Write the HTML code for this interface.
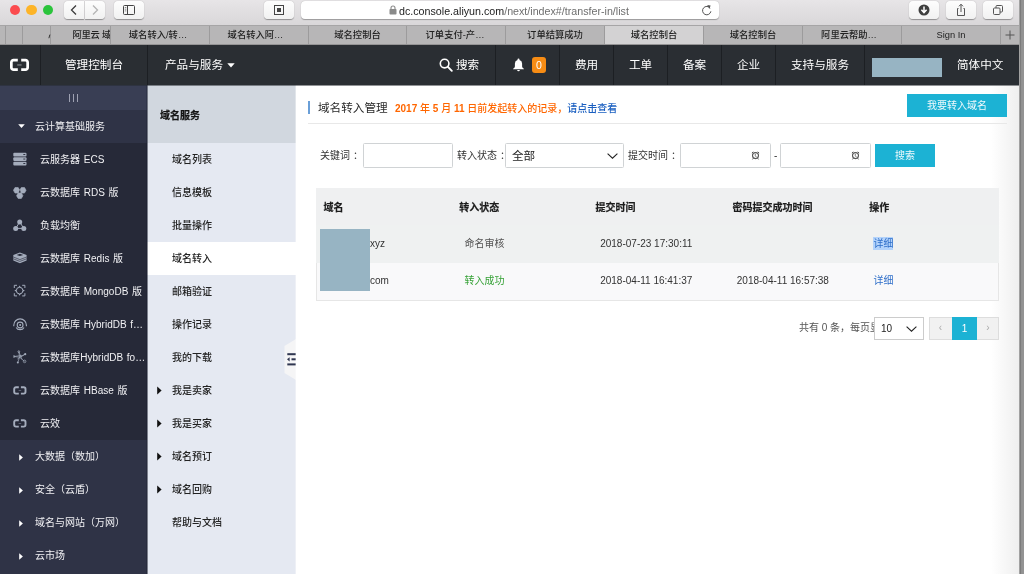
<!DOCTYPE html>
<html lang="zh-CN">
<head>
<meta charset="utf-8">
<title>域名控制台</title>
<style>
*{box-sizing:border-box;margin:0;padding:0}
html,body{width:1024px;height:574px;overflow:hidden;background:#fff}
body{font-family:"Liberation Sans","Noto Sans CJK SC",sans-serif;font-size:12px;color:#333;position:relative}
.abs{position:absolute}
/* browser chrome */
#titlebar{left:0;top:0;width:1020px;height:25px;background:linear-gradient(#e7e5e7,#d9d7d9)}
.tl{position:absolute;top:4.9px;width:10.4px;height:10.4px;border-radius:50%}
.tbtn{position:absolute;top:1px;height:18px;background:linear-gradient(#fdfdfd,#f1f1f1);border-radius:4px;box-shadow:0 0.5px 1px rgba(0,0,0,.35)}
#url{left:301px;top:1px;width:418px;height:18px;background:#fff;border-radius:4px;box-shadow:0 0.5px 1px rgba(0,0,0,.3);font-size:10.7px;line-height:18px;color:#222;white-space:nowrap}
#tabs{left:0;top:25px;width:1020px;height:20px;background:#b7b6b7;border-top:1px solid #a6a5a6;border-bottom:1px solid #959495}
.tab{position:absolute;top:0;height:18px;border-left:1px solid #9c9b9c;font-size:9.3px;line-height:18px;color:#222;font-weight:500;text-align:center;white-space:nowrap;overflow:hidden}
.tab.act{background:#d3d2d3}
.tab.l{text-align:left;padding-left:21.5px;letter-spacing:-0.25px}
/* header */
#hdr{left:0;top:45px;width:1020px;height:40px;background:#2a2e33;color:#fff;font-size:11.6px;line-height:40px}
.hsep{position:absolute;top:0;width:1px;height:40px;background:#1c1f23}
.hi{position:absolute;top:0;white-space:nowrap}
/* sidebar */
#side{left:0;top:85px;width:147px;height:489px;background:#262938;color:#f0f0f3;font-size:10px}
.sg{position:absolute;left:0;width:147px;background:#2f3346}
.si{position:absolute;left:40px;word-spacing:0.7px;letter-spacing:0.04px;white-space:nowrap;line-height:33px;height:33px}
.sgi{position:absolute;left:35px;white-space:nowrap;line-height:33px;height:33px}
/* sub sidebar */
#sub{z-index:2;left:147px;top:85px;width:149px;height:489px;background:#e5e9f2;color:#222;font-size:10px;font-weight:500}
.subi{position:absolute;left:25px;margin-top:-0.4px;white-space:nowrap;line-height:33px;height:33px}
/* main */

#main{left:295px;top:85px;width:725px;height:489px;background:linear-gradient(90deg,#fff 0,#fff 696px,#efefef 724px);font-size:10px;color:#333}
#main .t{position:absolute;white-space:nowrap}
.inp{position:absolute;top:58px;height:25.4px;border:1px solid #d0d3d5;border-radius:1.5px;background:#fff}
.cl{position:relative;left:3px}
.btn{position:absolute;background:#1cb2d4;color:#fff;text-align:center;white-space:nowrap}
.th{position:absolute;top:104px;height:37px;line-height:37px;font-weight:bold;color:#1c1c1c;-webkit-text-stroke:0.2px #1c1c1c;white-space:nowrap}
.td{position:absolute;margin-top:0.3px;height:37px;line-height:37px;white-space:nowrap;color:#333}

</style>
</head>
<body><div id="wrap" style="position:absolute;left:0;top:0;width:1024px;height:574px;will-change:transform">
<div id="titlebar" class="abs">
<div class="tl" style="left:9.9px;background:#fb4b4e"></div>
<div class="tl" style="left:26.4px;background:#fdb428"></div>
<div class="tl" style="left:42.8px;background:#2bc43c"></div>
<div class="tbtn" style="left:64px;width:20px;border-radius:4px 0 0 4px"><svg width="20" height="18" viewBox="0 0 20 18"><path d="M12 4.5 L7.5 9 L12 13.5" fill="none" stroke="#3c3c3c" stroke-width="1.3"/></svg></div>
<div class="tbtn" style="left:85px;width:20px;border-radius:0 4px 4px 0"><svg width="20" height="18" viewBox="0 0 20 18"><path d="M8 4.5 L12.5 9 L8 13.5" fill="none" stroke="#b4b4b4" stroke-width="1.3"/></svg></div>
<div class="tbtn" style="left:114px;width:30px"><svg width="30" height="18" viewBox="0 0 30 18"><rect x="9.5" y="4.5" width="11" height="9" rx="1" fill="none" stroke="#444" stroke-width="1"/><path d="M13.5 4.5 V13.5" stroke="#444" stroke-width="1"/><path d="M10.8 6.5h1.5M10.8 8.2h1.5M10.8 9.9h1.5" stroke="#444" stroke-width="0.6"/></svg></div>
<div class="tbtn" style="left:264px;width:30px"><svg width="30" height="18" viewBox="0 0 30 18"><rect x="10.5" y="4.5" width="9" height="9" fill="none" stroke="#444" stroke-width="1"/><rect x="13" y="7" width="4" height="4" fill="#444"/></svg></div>
<div id="url" class="abs"><svg class="abs" style="left:88px;top:4px" width="8" height="10" viewBox="0 0 8 10"><rect x="0.5" y="4" width="7" height="5.5" rx="0.8" fill="#8a8a8a"/><path d="M2 4.5 V3 a2 2 0 0 1 4 0 V4.5" fill="none" stroke="#8a8a8a" stroke-width="1.1"/></svg><span class="abs" style="left:98px;top:0.5px">dc.console.aliyun.com<span style="color:#6e6e6e">/next/index#/transfer-in/list</span></span><svg class="abs" style="left:399px;top:3px" width="13" height="13" viewBox="0 0 13 13"><path d="M10.2 4.2 A4.2 4.2 0 1 0 10.9 7.3" fill="none" stroke="#555" stroke-width="1"/><path d="M7.2 1.0 L10.6 1.6 L9.4 4.9 Z" fill="#555"/></svg></div>
<div class="tbtn" style="left:909px;width:30px"><svg width="30" height="18" viewBox="0 0 30 18"><circle cx="15" cy="9" r="5.5" fill="#3e3e3e"/><path d="M15 5.5 V11 M12.4 8.8 L15 11.6 L17.6 8.8" fill="none" stroke="#fff" stroke-width="1.5"/></svg></div>
<div class="tbtn" style="left:946px;width:30px"><svg width="30" height="18" viewBox="0 0 30 18"><path d="M12.5 7.5 H11.5 V14.5 H18.5 V7.5 H17.5" fill="none" stroke="#555" stroke-width="1"/><path d="M15 11 V3.5 M13 5.3 L15 3.2 L17 5.3" fill="none" stroke="#555" stroke-width="1"/></svg></div>
<div class="tbtn" style="left:983px;width:30px"><svg width="30" height="18" viewBox="0 0 30 18"><rect x="10.5" y="7" width="6.5" height="6.5" rx="1" fill="none" stroke="#555" stroke-width="1"/><path d="M13 7 V5.5 a1 1 0 0 1 1 -1 H18.5 a1 1 0 0 1 1 1 V10 a1 1 0 0 1 -1 1 H17" fill="none" stroke="#555" stroke-width="1"/></svg></div>
</div>
<div id="tabs" class="abs"><div class="tab" style="left:5px;width:17px"></div><div class="tab" style="left:22px;width:28px"></div><div class="tab l" style="left:50px;width:60px">阿里云 域</div><div class="tab" style="left:110px;width:99px;padding-right:4px">域名转入/转…</div><div class="tab" style="left:209px;width:99px;padding-right:7px">域名转入阿…</div><div class="tab" style="left:308px;width:98px">域名控制台</div><div class="tab" style="left:406px;width:99px;padding-right:2px">订单支付-产…</div><div class="tab" style="left:505px;width:99px">订单结算成功</div><div class="tab act" style="left:604px;width:99px">域名控制台</div><div class="tab" style="left:703px;width:99px">域名控制台</div><div class="tab" style="left:802px;width:99px;padding-right:6px">阿里云帮助…</div><div class="tab" style="left:901px;width:99px">Sign In</div><div class="tab" style="left:1000px;width:20px"></div><svg class="abs" style="left:47px;top:8px" width="4" height="5" viewBox="0 0 4 5"><path d="M2.9 0.6 L1.9 4.2" stroke="#333" stroke-width="1"/></svg><svg class="abs" style="left:1004px;top:3px" width="12" height="12" viewBox="0 0 12 12"><path d="M6 1.5 V10.5 M1.5 6 H10.5" stroke="#555" stroke-width="1"/></svg></div>
<div id="hdr" class="abs">
<svg class="abs" style="left:9px;top:13px" width="22" height="14" viewBox="0 0 22 14"><path d="M8.8 2.2 H4.6 A2.2 2.2 0 0 0 2.35 4.4 V9.4 A2.2 2.2 0 0 0 4.6 11.6 H8.8" fill="none" stroke="#fff" stroke-width="2.7"/><path d="M12.2 2.2 H16.4 A2.2 2.2 0 0 1 18.65 4.4 V9.4 A2.2 2.2 0 0 1 16.4 11.6 H12.2" fill="none" stroke="#fff" stroke-width="2.7"/><rect x="8.2" y="6.3" width="4.4" height="1.3" fill="#7d8084"/></svg>
<div class="hsep" style="left:40px"></div>
<div class="hi" style="left:65px">管理控制台</div>
<div class="hsep" style="left:147px"></div>
<div class="hi" style="left:165px">产品与服务</div>
<svg class="abs" style="left:227px;top:18px" width="8" height="5" viewBox="0 0 8 5"><path d="M0.3 0.3 H7.7 L4 4.6 Z" fill="#fff"/></svg>
<svg class="abs" style="left:439px;top:13px" width="14" height="14" viewBox="0 0 14 14"><circle cx="5.6" cy="5.6" r="4.3" fill="none" stroke="#fff" stroke-width="1.6"/><path d="M8.7 8.7 L12.8 12.8" stroke="#fff" stroke-width="1.9" stroke-linecap="round"/></svg>
<div class="hi" style="left:456px">搜索</div>
<div class="hsep" style="left:495px"></div>
<svg class="abs" style="left:512px;top:13px" width="13" height="14" viewBox="0 0 13 14"><path d="M6.5 0.6 a1 1 0 0 1 1 1 v0.5 a3.6 3.6 0 0 1 2.6 3.5 v2.6 c0 1.2 0.8 1.9 1.8 2.5 v0.5 H1.1 v-0.5 c1 -0.6 1.8 -1.3 1.8 -2.5 V5.6 a3.6 3.6 0 0 1 2.6 -3.5 V1.6 a1 1 0 0 1 1 -1 Z" fill="#fff"/><path d="M5.2 12 a1.3 1.3 0 0 0 2.6 0 Z" fill="#fff"/></svg>
<div class="abs" style="left:532px;top:12px;width:14px;height:16px;border-radius:3px;background:#f78c14;font-size:10.5px;line-height:16px;text-align:center;color:#fff">0</div>
<div class="hsep" style="left:559px"></div>
<div class="hi" style="left:575px">费用</div>
<div class="hsep" style="left:613px"></div>
<div class="hi" style="left:629px">工单</div>
<div class="hsep" style="left:667px"></div>
<div class="hi" style="left:683px">备案</div>
<div class="hsep" style="left:721px"></div>
<div class="hi" style="left:737px">企业</div>
<div class="hsep" style="left:775px"></div>
<div class="hi" style="left:791px">支持与服务</div>
<div class="hsep" style="left:864px"></div>
<div class="abs" style="left:872px;top:13px;width:70px;height:19px;background:#97b4c3"></div>
<div class="hi" style="left:957px">简体中文</div>
</div>
<div id="side" class="abs"><div class="sg" style="top:0;height:25px;background:#393e54"></div><svg class="abs" style="left:68px;top:9px" width="11" height="8" viewBox="0 0 11 8"><path d="M1.5 0 V8 M5.5 0 V8 M9.5 0 V8" stroke="#a9adbd" stroke-width="0.9"/></svg><div class="sg" style="top:25px;height:33px"></div><svg class="abs" style="left:18px;top:39px" width="7" height="4" viewBox="0 0 7 4"><path d="M0.2 0.2 H6.8 L3.5 3.9 Z" fill="#fff"/></svg><div class="sgi" style="top:25px">云计算基础服务</div><svg class="abs" style="left:13px;top:67px" width="14" height="14" viewBox="0 0 14 14"><g fill="#a4acbc"><rect x="0.3" y="0.7" width="13.2" height="3.7" rx="1"/><rect x="0.3" y="5.2" width="13.2" height="3.7" rx="1"/><rect x="0.3" y="9.7" width="13.2" height="3.7" rx="1"/></g><g fill="#262938"><rect x="10.3" y="2.1" width="2" height="0.9"/><rect x="10.3" y="6.6" width="2" height="0.9"/><rect x="10.3" y="11.1" width="2" height="0.9"/></g></svg><div class="si" style="top:58px">云服务器 ECS</div><svg class="abs" style="left:13px;top:100.5px" width="14" height="14" viewBox="0 0 14 14"><g fill="#a4acbc" stroke="#a4acbc" stroke-width="0.6" stroke-linejoin="round"><polygon points="6.80,4.30 5.20,7.07 2.00,7.07 0.40,4.30 2.00,1.53 5.20,1.53"/><polygon points="13.10,4.30 11.50,7.07 8.30,7.07 6.70,4.30 8.30,1.53 11.50,1.53"/><polygon points="9.95,9.70 8.35,12.47 5.15,12.47 3.55,9.70 5.15,6.93 8.35,6.93"/></g><rect x="6.2" y="4.6" width="1.2" height="1.2" fill="#262938"/></svg><div class="si" style="top:91px">云数据库 RDS 版</div><svg class="abs" style="left:13px;top:133.2px" width="14" height="14" viewBox="0 0 14 14"><path d="M6.7 4 L2.7 10.4 H10.8 Z" stroke="#a4acbc" stroke-width="1" fill="none"/><g fill="#a4acbc"><circle cx="6.7" cy="4" r="2.5"/><circle cx="2.7" cy="10.4" r="2.5"/><circle cx="10.8" cy="10.4" r="2.5"/></g></svg><div class="si" style="top:124px">负载均衡</div><svg class="abs" style="left:13px;top:166px" width="14" height="14" viewBox="0 0 14 14"><path d="M6.9 1.4 L13.6 3.9 V9.6 L6.9 12.3 L0.3 9.6 V3.9 Z" fill="#a4acbc"/><path d="M3.6 3.9 L6.9 2.7 L10.3 3.9 L6.9 5.1 Z" fill="#262938"/><path d="M0.3 6 L6.9 8.6 L13.6 6 M0.3 7.8 L6.9 10.4 L13.6 7.8" stroke="#262938" stroke-width="0.6" fill="none"/></svg><div class="si" style="top:157px">云数据库 Redis 版</div><svg class="abs" style="left:13px;top:199px" width="14" height="14" viewBox="0 0 14 14"><g fill="none" stroke="#a4acbc" stroke-width="1"><path d="M1.3 4 V1.3 H4 M9.2 1.3 H11.9 V4 M11.9 9.2 V11.9 H9.2 M4 11.9 H1.3 V9.2"/><circle cx="6.6" cy="6.6" r="3.3"/></g><g fill="#a4acbc"><path d="M6.6 1.4 L7.7 3.3 H5.5 Z"/><path d="M6.6 11.8 L7.7 9.9 H5.5 Z"/><path d="M1.4 6.6 L3.3 5.5 V7.7 Z"/><path d="M11.8 6.6 L9.9 5.5 V7.7 Z"/></g></svg><div class="si" style="top:190px">云数据库 MongoDB 版</div><svg class="abs" style="left:13px;top:232px" width="14" height="14" viewBox="0 0 14 14"><g fill="none" stroke="#a4acbc" stroke-width="1.1"><path d="M0.8 9.2 V8.2 A6.2 6.2 0 0 1 13.4 8.2 V9.2"/><path d="M3.2 10.4 A4.2 3.6 0 0 0 11 10.4"/><circle cx="7.1" cy="8" r="2.9"/></g><circle cx="7.1" cy="8" r="1" fill="#a4acbc"/></svg><div class="si" style="top:223px">云数据库 HybridDB f…</div><svg class="abs" style="left:13px;top:264.5px" width="14" height="14" viewBox="0 0 14 14"><g stroke="#a4acbc" stroke-width="0.7" fill="none"><path d="M6.5 7.2 L5.8 1.6 M6.5 7.2 L12.2 4.2 M6.5 7.2 L1 6.5 M6.5 7.2 L4.8 12.6 M6.5 7.2 L11.6 11.4 M5.8 1.6 L9 9.4 M12.2 4.2 L4.4 9 M1 6.5 L8.8 5.4"/><circle cx="11.6" cy="11.4" r="1.3"/><circle cx="1" cy="6.5" r="0.9"/><circle cx="5.8" cy="1.6" r="0.9"/></g><g fill="#a4acbc"><circle cx="12.2" cy="4.2" r="1.1"/><circle cx="4.8" cy="12.6" r="1"/></g></svg><div class="si" style="top:256px">云数据库HybridDB fo…</div><svg class="abs" style="left:13px;top:301px" width="14" height="9" viewBox="0 0 14 9"><g fill="none" stroke="#a4acbc" stroke-width="1.9"><path d="M5.8 1.2 H3 A1.8 1.8 0 0 0 1.2 3 V5.8 A1.8 1.8 0 0 0 3 7.6 H5.8"/><path d="M7.9 1.2 H10.7 A1.8 1.8 0 0 1 12.5 3 V5.8 A1.8 1.8 0 0 1 10.7 7.6 H7.9"/></g><rect x="5.6" y="4" width="2.6" height="0.8" fill="#6b7080"/></svg><div class="si" style="top:289px">云数据库 HBase 版</div><svg class="abs" style="left:13px;top:334px" width="14" height="9" viewBox="0 0 14 9"><g fill="none" stroke="#a4acbc" stroke-width="1.9"><path d="M5.8 1.2 H3 A1.8 1.8 0 0 0 1.2 3 V5.8 A1.8 1.8 0 0 0 3 7.6 H5.8"/><path d="M7.9 1.2 H10.7 A1.8 1.8 0 0 1 12.5 3 V5.8 A1.8 1.8 0 0 1 10.7 7.6 H7.9"/></g><rect x="5.6" y="4" width="2.6" height="0.8" fill="#6b7080"/></svg><div class="si" style="top:322px">云效</div><div class="sg" style="top:355px;height:134px"></div><svg class="abs" style="left:19px;top:369px" width="4" height="7" viewBox="0 0 4 7"><path d="M0.2 0.2 V6.8 L3.9 3.5 Z" fill="#fff"/></svg><div class="sgi" style="top:355px">大数据（数加）</div><svg class="abs" style="left:19px;top:402px" width="4" height="7" viewBox="0 0 4 7"><path d="M0.2 0.2 V6.8 L3.9 3.5 Z" fill="#fff"/></svg><div class="sgi" style="top:388px">安全（云盾）</div><svg class="abs" style="left:19px;top:435px" width="4" height="7" viewBox="0 0 4 7"><path d="M0.2 0.2 V6.8 L3.9 3.5 Z" fill="#fff"/></svg><div class="sgi" style="top:421px">域名与网站（万网）</div><svg class="abs" style="left:19px;top:468px" width="4" height="7" viewBox="0 0 4 7"><path d="M0.2 0.2 V6.8 L3.9 3.5 Z" fill="#fff"/></svg><div class="sgi" style="top:454px">云市场</div><div class="abs" style="left:146px;top:0;width:1px;height:489px;background:rgba(20,22,40,.25)"></div></div>
<div id="sub" class="abs"><div class="abs" style="left:0;top:0;width:149px;height:58px;background:#d1d7df"></div><div class="abs" style="left:13px;top:1.5px;line-height:58px;font-weight:bold;color:#151515;-webkit-text-stroke:0.25px #151515;white-space:nowrap">域名服务</div><div class="abs" style="left:0;top:157px;width:149px;height:33px;background:#fff"></div><div class="subi" style="top:58px">域名列表</div><div class="subi" style="top:91px">信息模板</div><div class="subi" style="top:124px">批量操作</div><div class="subi" style="top:157px">域名转入</div><div class="subi" style="top:190px">邮箱验证</div><div class="subi" style="top:223px">操作记录</div><div class="subi" style="top:256px">我的下载</div><svg class="abs" style="left:10px;top:301px" width="5" height="9" viewBox="0 0 5 9"><path d="M0.2 0.4 V8.6 L4.6 4.5 Z" fill="#111"/></svg><div class="subi" style="top:289px">我是卖家</div><svg class="abs" style="left:10px;top:334px" width="5" height="9" viewBox="0 0 5 9"><path d="M0.2 0.4 V8.6 L4.6 4.5 Z" fill="#111"/></svg><div class="subi" style="top:322px">我是买家</div><svg class="abs" style="left:10px;top:367px" width="5" height="9" viewBox="0 0 5 9"><path d="M0.2 0.4 V8.6 L4.6 4.5 Z" fill="#111"/></svg><div class="subi" style="top:355px">域名预订</div><svg class="abs" style="left:10px;top:400px" width="5" height="9" viewBox="0 0 5 9"><path d="M0.2 0.4 V8.6 L4.6 4.5 Z" fill="#111"/></svg><div class="subi" style="top:388px">域名回购</div><div class="subi" style="top:421px">帮助与文档</div><svg class="abs" style="left:137px;top:254px" width="12" height="42" viewBox="0 0 12 42"><path d="M12 0 L0.5 7 V34 L12 41 Z" fill="#f5f5f6"/><g fill="#2f3650"><rect x="3.3" y="14.2" width="8.7" height="2"/><rect x="7.5" y="19.3" width="4.5" height="2"/><rect x="3.3" y="24.4" width="8.7" height="2"/><path d="M3 20.3 L5.6 18.2 V22.4 Z"/></g></svg></div>
<div class="abs" style="left:295px;top:85px;width:1px;height:489px;background:rgba(255,255,255,.35);z-index:3"></div><div class="abs" style="left:0;top:85px;width:1019px;height:1px;background:rgba(36,40,45,.5);z-index:4"></div><div class="abs" style="left:147px;top:85px;width:1px;height:489px;background:rgba(38,41,56,.55);z-index:3"></div><div id="main" class="abs"><div class="abs" style="left:13px;top:16px;width:2px;height:13px;background:#6a9fd8"></div><div class="t" style="left:23px;top:10px;line-height:26px;font-size:11.6px;color:#2a2a2a">域名转入管理</div><div class="t" style="left:100px;top:11px;line-height:26px;color:#f60;font-weight:500"><b>2017</b> 年 <b>5</b> 月 <b>11</b> 日前发起转入的记录，<span style="color:#1a5fc0">请点击查看</span></div><div class="btn" style="left:612px;top:9px;width:100px;height:23px;line-height:24.6px;color:rgba(255,255,255,.93)">我要转入域名</div><div class="abs" style="left:13px;top:38px;width:699px;height:1px;background:#e8e8e8"></div><div class="t" style="left:25px;top:58px;line-height:25px">关键词<span class="cl">：</span></div><div class="inp" style="left:68px;width:90px"></div><div class="t" style="left:162px;top:58px;line-height:25px">转入状态<span class="cl">：</span></div><div class="inp" style="left:210px;width:119px"><div class="t" style="left:6px;top:0;line-height:24px;font-size:11.6px;color:#222">全部</div><svg class="abs" style="left:101px;top:9px" width="11" height="6" viewBox="0 0 11 6"><path d="M0.6 0.6 L5.5 5.2 L10.4 0.6" fill="none" stroke="#222" stroke-width="1.1"/></svg></div><div class="t" style="left:333px;top:58px;line-height:25px">提交时间<span class="cl">：</span></div><div class="inp" style="left:385px;width:91px"><svg class="abs" style="left:70px;top:7px" width="9" height="9" viewBox="0 0 9 9"><circle cx="4.5" cy="4.6" r="3" fill="none" stroke="#555" stroke-width="1.1"/><path d="M4.3 2.9 V4.7 L5.3 6" fill="none" stroke="#555" stroke-width="0.8"/><path d="M0.9 2 L2.3 0.8 M8.1 2 L6.7 0.8 M1.5 8.4 L2.4 7.2 M7.5 8.4 L6.6 7.2" stroke="#555" stroke-width="1"/></svg></div><div class="t" style="left:479px;top:58px;line-height:25px">-</div><div class="inp" style="left:485px;width:91px"><svg class="abs" style="left:70px;top:7px" width="9" height="9" viewBox="0 0 9 9"><circle cx="4.5" cy="4.6" r="3" fill="none" stroke="#555" stroke-width="1.1"/><path d="M4.3 2.9 V4.7 L5.3 6" fill="none" stroke="#555" stroke-width="0.8"/><path d="M0.9 2 L2.3 0.8 M8.1 2 L6.7 0.8 M1.5 8.4 L2.4 7.2 M7.5 8.4 L6.6 7.2" stroke="#555" stroke-width="1"/></svg></div><div class="btn" style="left:580px;top:59px;width:60px;height:23px;line-height:24.4px;color:rgba(255,255,255,.93)">搜索</div><div class="abs" style="left:21px;top:103px;width:683px;height:112.6px;background:#f9f9fa;border:1px solid #e6e6e6;border-top:0"></div><div class="abs" style="left:21px;top:103px;width:683px;height:37px;background:#eff0f1"></div><div class="abs" style="left:21px;top:140px;width:683px;height:37.8px;background:#eff1f1"></div><div class="th" style="left:28.6px">域名</div><div class="th" style="left:164.3px">转入状态</div><div class="th" style="left:300.6px">提交时间</div><div class="th" style="left:437.4px">密码提交成功时间</div><div class="th" style="left:574.2px">操作</div><div class="td" style="left:75px;top:140px">xyz</div><div class="td" style="left:169.6px;top:140px;color:#555">命名审核</div><div class="td" style="left:305.2px;top:140px">2018-07-23 17:30:11</div><div class="abs" style="left:578.4px;top:152px;width:20px;height:13px;background:#b3d3fb"></div><div class="td" style="left:578.4px;top:140px;color:#2f6fc9">详细</div><div class="td" style="left:75px;top:177px">com</div><div class="td" style="left:169.6px;top:177px;color:#35a135">转入成功</div><div class="td" style="left:305.2px;top:177px">2018-04-11 16:41:37</div><div class="td" style="left:441.8px;top:177px">2018-04-11 16:57:38</div><div class="td" style="left:578.4px;top:177px;color:#2f6fc9">详细</div><div class="abs" style="left:25px;top:144px;width:50px;height:62px;background:#97b4c3"></div><div class="t" style="left:504px;top:232px;line-height:22px;color:#555">共有 0 条，每页显</div><div class="abs" style="left:579px;top:232px;width:50px;height:23px;border:1px solid #ccc;background:#fff"><div class="t" style="left:6px;top:0;line-height:21px;color:#222">10</div><svg class="abs" style="left:31px;top:8px" width="11" height="6" viewBox="0 0 11 6"><path d="M0.6 0.6 L5.5 5.2 L10.4 0.6" fill="none" stroke="#222" stroke-width="1.1"/></svg></div><div class="abs" style="left:634px;top:232px;width:70px;height:23px;border:1px solid #ddd;background:#f1f1f1"></div><div class="t" style="left:634px;top:232px;width:23px;line-height:22px;text-align:center;color:#aaa">‹</div><div class="btn" style="left:657px;top:232px;width:25px;height:23px;line-height:23px">1</div><div class="t" style="left:682px;top:232px;width:22px;line-height:22px;text-align:center;color:#aaa">›</div></div>
<div class="abs" style="left:1019px;top:0;width:5px;height:574px;background:linear-gradient(90deg,#c8c8c8 0,#7c7c7c 1px,#7c7c7c 1.6px,#939393 2.6px)"></div>
</div></body>
</html>
